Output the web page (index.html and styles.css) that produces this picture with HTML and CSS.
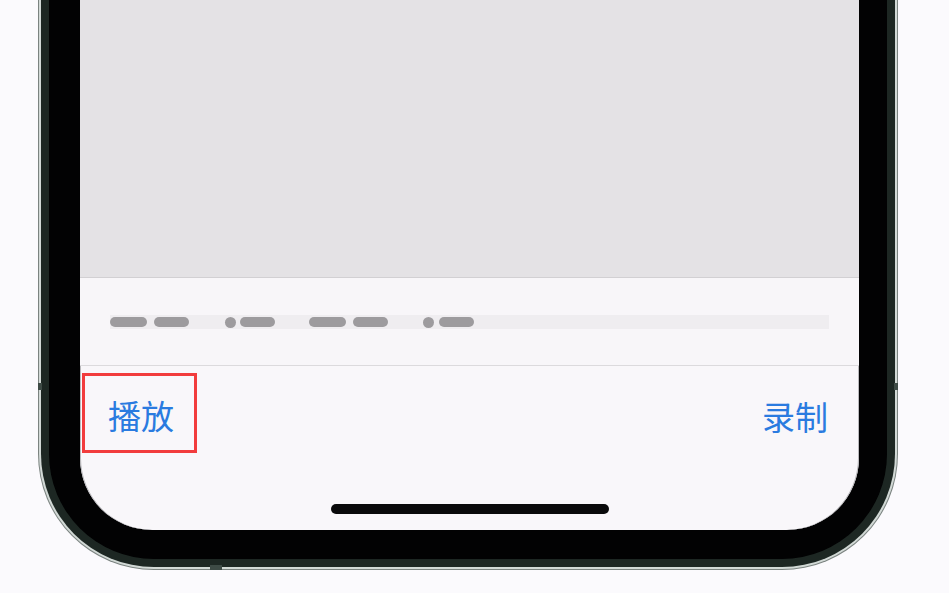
FILE: index.html
```html
<!DOCTYPE html>
<html lang="zh-CN">
<head>
<meta charset="utf-8">
<title>播放 / 录制</title>
<link rel="stylesheet" href="styles.css">
</head>
<body>
<div class="phone">
  <span class="band band-left"></span>
  <span class="band band-right"></span>
  <span class="band band-bottom"></span>
  <div class="rim">
    <div class="steel">
      <div class="bezel">
        <div class="screen">
          <div class="canvas"></div>
          <div class="strip">
            <div class="track">
              <span class="dash w37"></span>
              <span class="dash w35 gap-s"></span>
              <span class="dot gap-l"></span>
              <span class="dash w35 gap-t"></span>
              <span class="dash w37 gap-l2"></span>
              <span class="dash w35 gap-s"></span>
              <span class="dot gap-l3"></span>
              <span class="dash w35 gap-t2"></span>
            </div>
          </div>
          <div class="toolbar">
            <div class="actions">
              <button class="action action-play">播放</button>
              <button class="action action-record">录制</button>
            </div>
            <div class="home-indicator"></div>
          </div>
        </div>
      </div>
    </div>
  </div>
</div>
</body>
</html>
```

FILE: styles.css
```css
html, body {
  margin: 0;
  padding: 0;
}
body {
  background: #fbfafd;
  width: 949px;
  height: 593px;
  overflow: hidden;
  font-family: "Noto Sans CJK SC", "Noto Sans", sans-serif;
}
.phone {
  position: relative;
  margin-left: 38px;
  width: 860px;
  height: 570px;
  background: #7b8380;
  padding: 0 1px 1px 1px;
  box-sizing: border-box;
  border-radius: 0 0 116px 116px;
}
.rim {
  height: 100%;
  background: #d2d9d6;
  padding: 0 2px 2px 2px;
  box-sizing: border-box;
  border-radius: 0 0 115px 115px;
}
.steel {
  height: 100%;
  background: #1d2723;
  padding: 0 8px 8px 8px;
  box-sizing: border-box;
  border-radius: 0 0 113px 113px;
}
.bezel {
  height: 100%;
  background: #020203;
  padding: 0 28px 29px 31px;
  box-sizing: border-box;
  border-radius: 0 0 105px 105px;
}
.screen {
  height: 100%;
  background: #f9f7fa;
  border-radius: 0 0 72px 72px;
  overflow: hidden;
  display: flex;
  flex-direction: column;
  box-shadow: inset 1px 0 0 #b9b8bb, inset -1px 0 0 #b9b8bb;
}
.canvas {
  height: 277px;
  flex: none;
  background: #e4e2e5;
  border-bottom: 1px solid #d2d0d3;
}
.strip {
  height: 88px;
  flex: none;
  background: #f8f6f9;
  border-bottom: 1px solid #dcdadd;
  padding: 37px 30px 0 30px;
  box-sizing: border-box;
}
.track {
  height: 14px;
  background: #efedf0;
  display: flex;
  align-items: center;
}
.dash {
  height: 10px;
  border-radius: 5px;
  background: #9d9b9e;
  flex: none;
}
.dot {
  width: 11px;
  height: 11px;
  border-radius: 50%;
  background: #9d9b9e;
  flex: none;
}
.w37 { width: 37px; }
.w35 { width: 35px; }
.gap-s { margin-left: 7px; }
.gap-l { margin-left: 36px; }
.gap-t { margin-left: 4px; }
.gap-l2 { margin-left: 34px; }
.gap-l3 { margin-left: 35px; }
.gap-t2 { margin-left: 5px; }
.toolbar {
  flex: 1;
  display: flex;
  flex-direction: column;
  padding-top: 7px;
}
.actions {
  height: 80px;
  display: flex;
  justify-content: space-between;
  align-items: center;
  padding: 0 31px 0 2px;
}
.action {
  font-family: "Noto Sans CJK SC", "Noto Sans", sans-serif;
  font-size: 33px;
  line-height: 1;
  color: #2a7be0;
  background: none;
  border: 0;
  padding: 0;
  margin: 0;
  letter-spacing: 0;
}
.action-play {
  width: 115px;
  height: 80px;
  border: 3px solid #f23c3d;
  box-sizing: border-box;
  text-align: left;
  padding: 5px 0 0 23px;
}
.action-record {
  padding-top: 6px;
}
.home-indicator {
  margin: 51px auto 0;
  width: 278px;
  height: 10px;
  border-radius: 5px;
  background: #0a0a0b;
}
.band {
  position: absolute;
  background: #3e4b46;
}
.band-left {
  left: 0;
  top: 383px;
  width: 4px;
  height: 7px;
}
.band-right {
  right: 0;
  top: 383px;
  width: 4px;
  height: 7px;
}
.band-bottom {
  left: 172px;
  bottom: 0;
  width: 12px;
  height: 5px;
}
```
